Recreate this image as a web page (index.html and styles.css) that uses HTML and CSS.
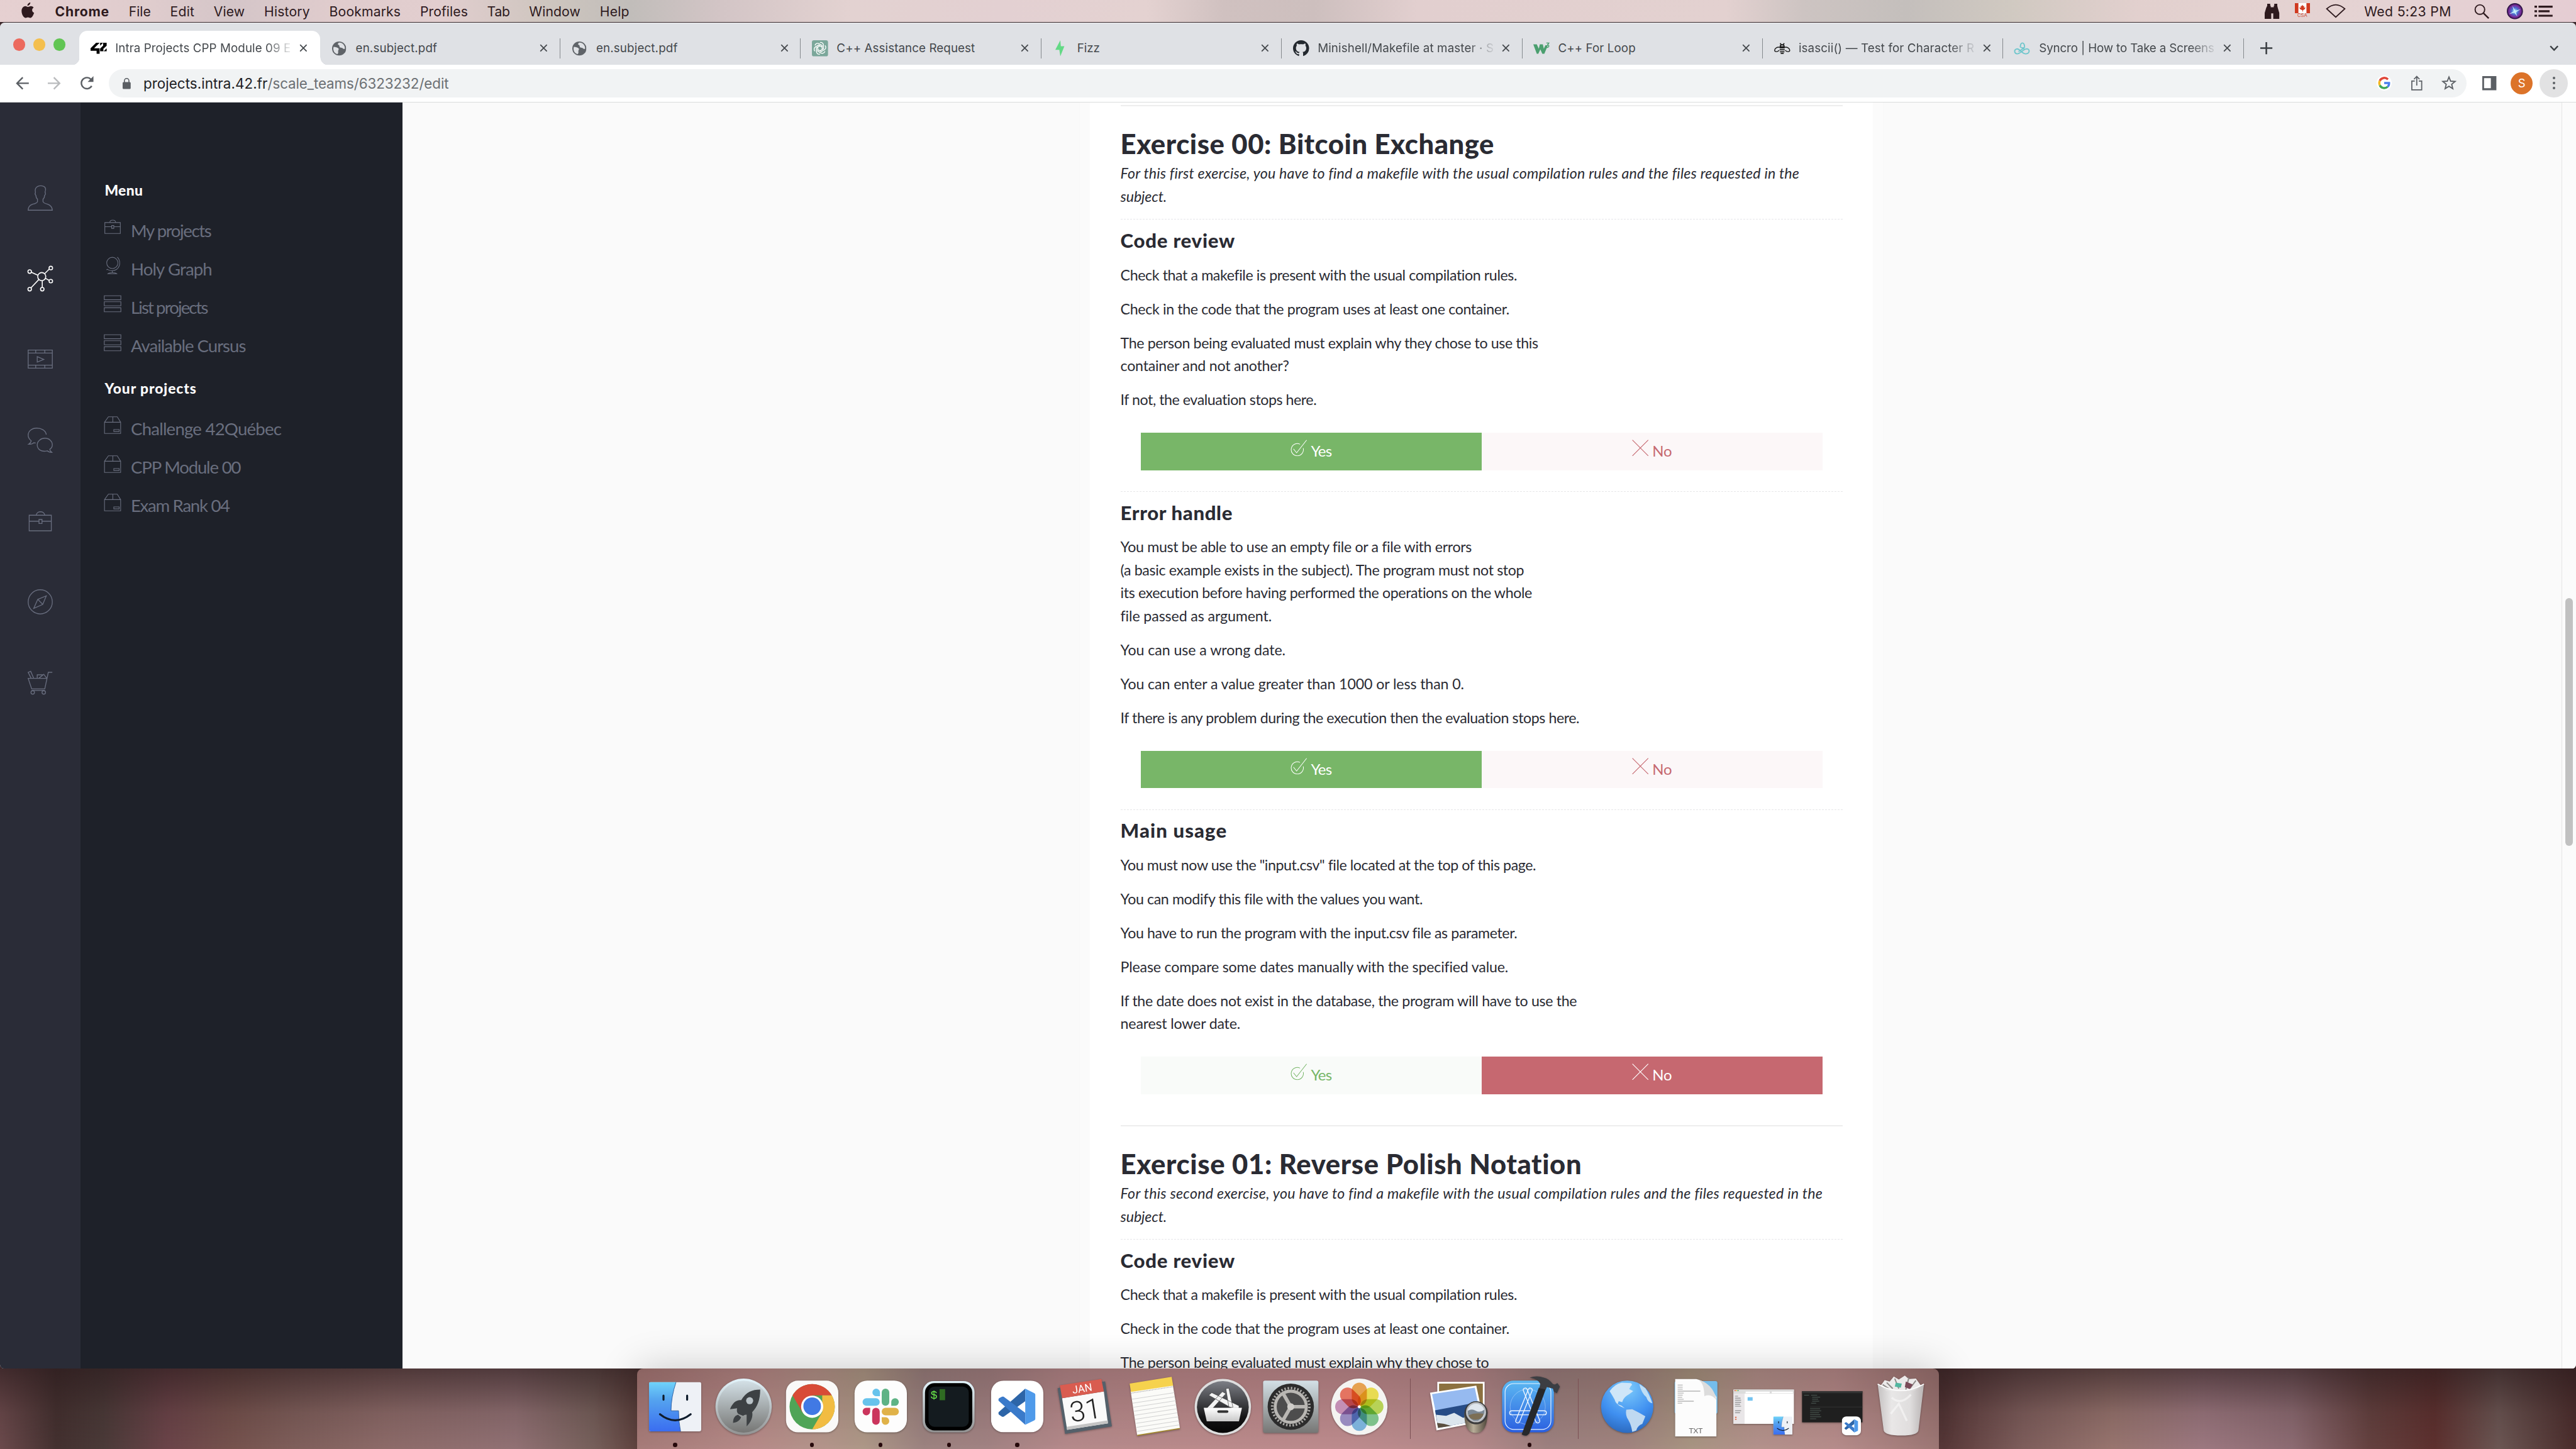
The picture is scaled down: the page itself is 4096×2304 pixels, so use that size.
FILE: index.html
```html
<!DOCTYPE html>
<html lang="en">
<head>
<meta charset="utf-8">
<title>Intra Projects CPP Module 09</title>
<link rel="stylesheet" href="styles.css">
</head>
<body>
<svg class="defs" aria-hidden="true">
  <defs>
    <linearGradient id="gFinder" x1="0" y1="0" x2="0" y2="1"><stop offset="0" stop-color="#6fd3fa"/><stop offset=".35" stop-color="#55a4ef"/><stop offset="1" stop-color="#3a6df0"/></linearGradient>
    <linearGradient id="gSilver" x1="0" y1="0" x2="0" y2="1"><stop offset="0" stop-color="#d3e0e6"/><stop offset="1" stop-color="#767674"/></linearGradient>
    <linearGradient id="gRim" x1="0" y1="0" x2="0" y2="1"><stop offset="0" stop-color="#e3f4fb"/><stop offset="1" stop-color="#929292"/></linearGradient>
    <linearGradient id="gDark" x1="0" y1="0" x2="0" y2="1"><stop offset="0" stop-color="#7d7f86"/><stop offset=".7" stop-color="#151516"/><stop offset="1" stop-color="#050505"/></linearGradient>
    <linearGradient id="gWhite" x1="0" y1="0" x2="0" y2="1"><stop offset="0" stop-color="#fff"/><stop offset="1" stop-color="#c9c9c9"/></linearGradient>
    <linearGradient id="gXcode" x1="0" y1="0" x2="0" y2="1"><stop offset="0" stop-color="#5cb9f2"/><stop offset="1" stop-color="#2b5fe0"/></linearGradient>
    <radialGradient id="gGlobe" cx=".5" cy=".15" r=".9"><stop offset="0" stop-color="#7ccbfb"/><stop offset=".6" stop-color="#3f8ff0"/><stop offset="1" stop-color="#2a65b8"/></radialGradient>
    <radialGradient id="gSiri"><stop offset="0" stop-color="#bff"/><stop offset=".4" stop-color="#4a6fd0"/><stop offset=".75" stop-color="#7a2a9a"/><stop offset="1" stop-color="#140a2c"/></radialGradient>
    <linearGradient id="gTrash" x1="0" y1="0" x2="1" y2="0"><stop offset="0" stop-color="#c9c6c6"/><stop offset=".3" stop-color="#efefef"/><stop offset=".7" stop-color="#e6e5e5"/><stop offset="1" stop-color="#bdb9b9"/></linearGradient>
    <linearGradient id="gBarrel" x1="0" y1="0" x2="1" y2="0"><stop offset="0" stop-color="#5f5648"/><stop offset=".4" stop-color="#b8ad98"/><stop offset="1" stop-color="#4d4539"/></linearGradient>

    <symbol id="close" viewBox="0 0 16 16"><path d="M1.5 1.5l13 13M14.500 1.500l-13 13" stroke="#45494d" stroke-width="2.300" fill="none"/></symbol>
    <symbol id="globe-tab" viewBox="0 0 28 28"><circle cx="14" cy="14" r="14" fill="#5f6368"/><path d="M3 10.500c4 0 8 1 10 3.500 1 2-1 3-1 5 0 2 1 3-1 6C6 24 2.500 20 2.500 14zM13 2.500c-2 2-2 3.500 0 4.500 2.500 1 1 3 2.500 4.500 2 1.500 5 .5 6.500 2.500 1 1.500 2.500 1 3.500 0C26 8 20 1 13 2.500z" fill="#dfe1e5"/></symbol>
    <symbol id="briefcase" viewBox="0 0 50 50"><path d="M3 14h44v31H3zM3 26h20M27.500 26H47M22.500 22.500h6v8h-6zM17 14c1-9 16-9 17 0" fill="none" stroke="currentColor"/></symbol>
    <symbol id="list" viewBox="0 0 35 34"><path d="M1 1h33v8H1zM1 13h33v8H1zM1 25h33v8H1z" fill="none" stroke="currentColor"/></symbol>
    <symbol id="box" viewBox="0 0 35 36"><path d="M1 12h33v23H1zM1 12l8-11h18l7 11M18 1v11M20 27h11v4H20z" fill="none" stroke="currentColor"/></symbol>
    <symbol id="yes" viewBox="0 0 34 34"><path d="M19.500 9.500A12.500 12.500 0 1 0 26 17.500M6 19l6.500 8L33 1" fill="none" stroke="currentColor" stroke-width="1.300"/></symbol>
    <symbol id="no" viewBox="0 0 33 33"><path d="M.8.8l31.500 31.500M32.300.8L.8 32.300" fill="none" stroke="currentColor" stroke-width="1.400"/></symbol>
    <symbol id="finder" viewBox="0 0 104 98"><rect width="104" height="98" rx="4" fill="#eef1f6"/><path d="M4 0h50Q44 30 44 57h15q0 22 4 41H4q-4 0-4-4V4q0-4 4-4z" fill="url(#gFinder)"/><path d="M54 0Q44 30 44 57h15q0 22 4 41" fill="none" stroke="#1c4f94" stroke-width="1"/><path d="M29 27v8M76 27v8M22 64q30 24 61 0" fill="none" stroke="#0f1c2c" stroke-width="4" stroke-linecap="round"/></symbol>
    <symbol id="vscode" viewBox="0 0 104 103"><rect width="104" height="103" rx="25" fill="#fff"/><path d="M68 16L15 63q-1 3 1 5l6 4h3L68 41z" fill="#2d65a8"/><path d="M15 40q-1-3 1-5l6-3h3l43 32v24z" fill="#3a7aca"/><path d="M68 16l18 9q2 1 2 3v48q0 2-2 3l-18 9z" fill="#4f9aea"/></symbol>
  </defs>
</svg>

<header class="menubar">
  <svg class="apple" viewBox="0 0 26 32"><path d="M18 0c0 3-2.500 6.500-6 6.500C11.500 3.500 15 0 18 0zM13 9c2 0 3.500-1.700 6-1.700 2.200 0 4.300 1 5.700 3-4.500 2.700-3.800 9 1 10.700C24.500 25 21.500 31.500 18 31.500c-2 0-3-1.200-5-1.200s-3 1.200-5 1.200C4 31.500 0 24 0 17.500 0 11 4 7.300 8 7.300c2 0 3.500 1.700 5 1.700z" fill="#2e1a1e"/></svg>
  <nav class="menus">
    <b class="m-app" data-w="108">Chrome</b><span data-w="44">File</span><span data-w="48">Edit</span><span data-w="62">View</span><span data-w="91">History</span><span data-w="142">Bookmarks</span><span data-w="95">Profiles</span><span data-w="45">Tab</span><span data-w="102">Window</span><span data-w="59">Help</span>
  </nav>
  <div class="status">
    <svg class="s-bino" viewBox="0 0 30 30"><path d="M5 0h6v4h1v3h6V4h1V0h6v4l1 4 3 10v12H17V19h-4v11H0V18L3 8l2-4z" fill="#2e1a1e"/></svg>
    <span class="flag">
      <svg viewBox="0 0 30 20"><path fill="#fff" d="M0 0h30v20H0z"/><path fill="#d03a20" d="M0 0h7v20H0zM23 0h7v20h-7zM15 3l1.500 3 2-.7-.5 4 3-1.300-1 3.500-4 3v2.500h-1V14.500l-5-3-1-3.500 3 1.300-.5-4 2 .7z"/></svg>
      <i>CSA</i>
    </span>
    <svg class="s-wifi" viewBox="0 0 40 28"><path d="M2 10Q20-6 38 10L20 26.500z" fill="none" stroke="#2e1a1e" stroke-width="2.200"/></svg>
    <span class="clock" data-w="173">Wed 5:23 PM</span>
    <svg class="s-mag" viewBox="0 0 30 30"><circle cx="11.500" cy="11.500" r="9.500" fill="none" stroke="#2e1a1e" stroke-width="2.400"/><path d="M18.500 18.500L29 29" stroke="#2e1a1e" stroke-width="3"/></svg>
    <svg class="s-siri" viewBox="0 0 32 32"><circle cx="16" cy="16" r="16" fill="url(#gSiri)"/><path d="M4 22l10-6L11 5l6 10 11-3-10 6 3 9-6-8z" fill="#cff4fa" opacity=".85"/></svg>
    <svg class="s-list" viewBox="0 0 36 22"><path d="M0 2h5M8 2h28M0 11h5M8 11h22M0 20h5M8 20h28" stroke="#2e1a1e" stroke-width="4"/></svg>
  </div>
</header>

<main class="window">
  <div class="tabstrip">
    <div class="lights"><i class="red"></i><i class="amber"></i><i class="green"></i></div>
    <div class="tab active"><svg class="fav" viewBox="0 0 32 32"><path d="M11 5h7L7 16h11v11h-6v-6H0v-5zM19 5h6l-6 6zM25 5h7v6l-6.500 6v5H19v-5.500l6-6zM32 16v6h-6z" fill="#000"/></svg><span class="tt fade" data-w="349">Intra Projects CPP Module 09 E</span><svg class="x"><use href="#close"/></svg></div>
    <div class="tab nosep"><svg class="fav sm"><use href="#globe-tab"/></svg><span class="tt" data-w="162">en.subject.pdf</span><svg class="x"><use href="#close"/></svg></div>
    <div class="tab"><svg class="fav sm"><use href="#globe-tab"/></svg><span class="tt" data-w="162">en.subject.pdf</span><svg class="x"><use href="#close"/></svg></div>
    <div class="tab"><svg class="fav" viewBox="0 0 32 32"><rect width="32" height="32" rx="4" fill="#7ba79a"/><g fill="none" stroke="#fff" stroke-width="1.700"><path id="k" d="M16 4.500c4-1 7 2 7 5.500v7l-7 4"/><use href="#k" transform="rotate(60 16 16)"/><use href="#k" transform="rotate(120 16 16)"/><use href="#k" transform="rotate(180 16 16)"/><use href="#k" transform="rotate(240 16 16)"/><use href="#k" transform="rotate(300 16 16)"/></g></svg><span class="tt" data-w="275">C++ Assistance Request</span><svg class="x"><use href="#close"/></svg></div>
    <div class="tab"><svg class="fav" viewBox="0 0 32 32"><path d="M15 0L5 19h8l0 0 2 13 8-20h-7z" fill="#63d985"/></svg><span class="tt" data-w="45">Fizz</span><svg class="x"><use href="#close"/></svg></div>
    <div class="tab"><svg class="fav" viewBox="0 0 16 16"><path fill="#24292f" d="M8 0C3.580 0 0 3.580 0 8c0 3.540 2.290 6.530 5.470 7.590.4.070.55-.17.55-.38 0-.19-.01-.82-.01-1.490-2.010.37-2.530-.49-2.690-.94-.09-.23-.48-.94-.82-1.130-.28-.15-.68-.52-.01-.53.63-.01 1.080.58 1.230.82.72 1.210 1.870.87 2.330.66.070-.52.28-.87.51-1.070-1.780-.2-3.640-.89-3.640-3.950 0-.87.31-1.590.82-2.150-.08-.2-.36-1.020.08-2.120 0 0 .67-.21 2.200.82.64-.18 1.320-.27 2-.27s1.360.09 2 .27c1.530-1.040 2.200-.82 2.200-.82.44 1.100.16 1.920.08 2.120.51.56.82 1.270.82 2.150 0 3.070-1.870 3.750-3.650 3.950.29.25.54.73.54 1.480 0 1.070-.01 1.930-.01 2.200 0 .21.15.46.55.38A8.010 8.010 0 0 0 16 8c0-4.420-3.580-8-8-8z"/></svg><span class="tt fade" data-w="350">Minishell/Makefile at master · S</span><svg class="x"><use href="#close"/></svg></div>
    <div class="tab"><svg class="fav" viewBox="0 0 32 32"><path d="M0 8h7l4 9 2-9h6l2 9 3-7h5l-7 17h-4l-4-9-4 9H7z" fill="#4b9f6f"/><path d="M26 5.500h5l-2.500 3.500q3.500 1 2 4-2 2.500-5 .5" fill="none" stroke="#4b9f6f" stroke-width="1.800"/></svg><span class="tt" data-w="154">C++ For Loop</span><svg class="x"><use href="#close"/></svg></div>
    <div class="tab"><svg class="fav" viewBox="0 0 32 32"><path d="M12 6l2 3h4l2-3M16 9c-3 0-4 2-4 4h8c0-2-1-4-4-4zM11 15h10M11 19h10M11.500 23h9M13 26h6" stroke="#1d1d1d" stroke-width="2.200" fill="none"/><path d="M11 14c-5-1-10 2-10 6 0 3 5 4 9 0M21 14c5-1 10 2 10 6 0 3-5 4-9 0" fill="none" stroke="#1d1d1d" stroke-width="1.800"/></svg><span class="tt fade" data-w="349">isascii() — Test for Character R</span><svg class="x"><use href="#close"/></svg></div>
    <div class="tab"><svg class="fav" viewBox="0 0 32 32"><g fill="none" stroke="#6fc6cc" stroke-width="2.300"><path d="M12 13C11 3 21 3 20 13M11 12c2 4 8 4 10 1M3 18c6-5 12 10 20 9 8-1 8-9 2-10-8 0-12 10-20 10-5-1-6-7-2-9M8 22c3 1 6-6 12-6"/></g></svg><span class="tt fade" data-w="348">Syncro | How to Take a Screens</span><svg class="x"><use href="#close"/></svg></div>
    <div class="newtab"><svg viewBox="0 0 24 24"><path d="M12 0v24M0 12h24" stroke="#3b3f43" stroke-width="3.200"/></svg></div>
    <svg class="chev" viewBox="0 0 18 12"><path d="M1.500 1.500L9 9.500l7.500-8" fill="none" stroke="#3b3f43" stroke-width="3"/></svg>
  </div>

  <div class="toolbar">
    <svg class="nav-i" viewBox="0 0 26 26"><path d="M26 13H2.500M14 1.500L2.500 13 14 24.500" fill="none" stroke="#5b5f64" stroke-width="3"/></svg>
    <svg class="nav-i" viewBox="0 0 26 26"><path d="M0 13h23.500M12 1.500L23.500 13 12 24.500" fill="none" stroke="#b9bbbd" stroke-width="3"/></svg>
    <svg class="nav-i reload" viewBox="0 0 28 28"><path d="M23.500 19.500A11 11 0 1 1 22 6.500" fill="none" stroke="#5b5f64" stroke-width="3"/><path d="M27 0v11.500H15.500z" fill="#5b5f64"/></svg>
    <div class="omnibox">
      <svg class="lock" viewBox="0 0 16 22"><path d="M3.500 9V5.500a4.500 4.500 0 0 1 9 0V9" fill="none" stroke="#5b5f64" stroke-width="2"/><rect y="8" width="16" height="14" rx="2" fill="#5b5f64"/></svg>
      <span class="url"><span data-w="246">projects.intra.42.fr</span><span class="path" data-w="360">/scale_teams/6323232/edit</span></span>
      <svg class="g" viewBox="0 0 30 30"><circle cx="15" cy="15" r="15" fill="#fff"/><g fill="none" stroke-width="4.300"><path d="M22.500 7.800A10 10 0 0 0 6.300 10.500" stroke="#e0483a"/><path d="M6.300 10.500a10 10 0 0 0 0 9" stroke="#f3b822"/><path d="M6.300 19.500a10 10 0 0 0 15.500 3" stroke="#3fa757"/><path d="M21.800 22.500A9.500 9.500 0 0 0 24.700 15H15" stroke="#4a80ee"/></g></svg>
      <svg class="share" viewBox="0 0 22 30"><path d="M7 11H1.200v17.500h19.600V11H15M11 20V2M5.500 7.500L11 2l5.500 5.500" fill="none" stroke="#5b5f64" stroke-width="2.200"/></svg>
      <svg class="star" viewBox="0 0 30 30"><path d="M15 3l3.300 8.300 9 .6-6.900 5.700 2.200 8.700L15 21.500l-7.600 4.800 2.200-8.700L2.700 11.900l9-.6z" fill="none" stroke="#5b5f64" stroke-width="2.300"/></svg>
    </div>
    <svg class="side" viewBox="0 0 28 28"><path d="M0 0h28v28H0zM3.500 4v20H17V4z" fill="#5b5f64" fill-rule="evenodd"/></svg>
    <span class="avatar">S</span>
    <span class="more"><i></i><i></i><i></i></span>
  </div>

  <div class="page">
    <aside class="rail">
      <svg viewBox="0 0 50 50"><path d="M1 49q0-9 9-12 9-2 9.500-5V27q-3-2-3-7-3-3-1-6-2-9 4-12 6-3 13 0 5 3 2 11 2 4-1 7 0 5-3 7v5q1 3 9 5 9 3 9.500 12z" fill="none" stroke="currentColor"/></svg>
      <svg class="on" viewBox="0 0 50 50"><g fill="none" stroke="currentColor"><circle cx="28" cy="21" r="8"/><circle cx="4" cy="11" r="3.500"/><circle cx="46" cy="4" r="3.500"/><circle cx="46" cy="30" r="3.500"/><circle cx="29" cy="46" r="3.500"/><circle cx="4" cy="46" r="3.500"/><path d="M7.500 12.500L20 18M34 15l9-9M35.500 24.500l7 4M29 29v13.500M6.500 43.500L22 27"/></g></svg>
      <svg viewBox="0 0 50 50"><path d="M1 7h48v36H1zM1 13h48M1 37h48M16 7v6M34 7v6M16 37v6M34 37v6M19 20v11l13-5.500z" fill="none" stroke="currentColor"/></svg>
      <svg viewBox="0 0 50 50"><path d="M37 14C36 5 27 1 18 1 8 1 1 7 1 15c0 5 2 8 6 11 0 3-2 5-5 7 5 0 8-1 10-3l4 .5M34 21c9 0 15 6 15 13 0 4-2 7-5 9 0 3 2 4 4 6-4 0-7-1-9-3-12 3-20-3-20-12 0-7 7-13 15-13z" fill="none" stroke="currentColor"/></svg>
      <svg><use href="#briefcase"/></svg>
      <svg viewBox="0 0 50 50"><circle cx="25" cy="25" r="24" fill="none" stroke="currentColor"/><path d="M37 13l-7 17-18 8 8-18zM20 20l10 10" fill="none" stroke="currentColor"/></svg>
      <svg viewBox="0 0 50 50"><path d="M49 5h-8L34 38H8L1 17h38M7 17L1 5l5-2 6 14M19 17v-7h12M22 17l10-8 6 8" fill="none" stroke="currentColor"/><circle cx="10" cy="45" r="3.500" fill="none" stroke="currentColor"/><circle cx="32" cy="45" r="3.500" fill="none" stroke="currentColor"/><path d="M8 41h26" stroke="currentColor"/></svg>
    </aside>
    <nav class="submenu">
      <h2 data-w="76">Menu</h2>
      <ul>
        <li><svg class="bc"><use href="#briefcase"/></svg><span data-w="159">My projects</span></li>
        <li><svg viewBox="0 0 35 36"><g fill="none" stroke="currentColor"><circle cx="17" cy="13" r="11.500"/><path d="M27 1l2 2c6 9 4 25-13 26-4 0-7-1-9-3l-2 1M17 29v4M8 35c3-3 15-3 18 0z"/></g></svg><span data-w="161">Holy Graph</span></li>
        <li><svg><use href="#list"/></svg><span data-w="152">List projects</span></li>
        <li><svg><use href="#list"/></svg><span data-w="228">Available Cursus</span></li>
      </ul>
      <h2 data-w="183">Your projects</h2>
      <ul>
        <li><svg><use href="#box"/></svg><span data-w="299">Challenge 42Québec</span></li>
        <li><svg><use href="#box"/></svg><span data-w="218">CPP Module 00</span></li>
        <li><svg><use href="#box"/></svg><span data-w="196">Exam Rank 04</span></li>
      </ul>
    </nav>

    <div class="content">
      <div class="card">
        <section class="exercise">
          <h1><span data-w="743">Exercise 00: Bitcoin Exchange</span></h1>
          <p class="lead"><span data-w="1347">For this first exercise, you have to find a makefile with the usual compilation rules and the files requested in the</span><span data-w="92">subject.</span></p>
          <div class="question">
            <h3><span data-w="228">Code review</span></h3>
            <p><span data-w="788">Check that a makefile is present with the usual compilation rules.</span></p>
            <p><span data-w="773">Check in the code that the program uses at least one container.</span></p>
            <p><span data-w="830">The person being evaluated must explain why they chose to use this</span><span data-w="335">container and not another?</span></p>
            <p><span data-w="390">If not, the evaluation stops here.</span></p>
            <div class="answers"><div class="yes picked"><svg><use href="#yes"/></svg><span data-w="41">Yes</span></div><div class="no"><svg><use href="#no"/></svg><span data-w="39">No</span></div></div>
          </div>
          <div class="question">
            <h3><span data-w="223">Error handle</span></h3>
            <p><span data-w="697">You must be able to use an empty file or a file with errors</span><span data-w="802">(a basic example exists in the subject). The program must not stop</span><span data-w="819">its execution before having performed the operations on the whole</span><span data-w="300">file passed as argument.</span></p>
            <p><span data-w="328">You can use a wrong date.</span></p>
            <p><span data-w="683">You can enter a value greater than 1000 or less than 0.</span></p>
            <p><span data-w="913">If there is any problem during the execution then the evaluation stops here.</span></p>
            <div class="answers"><div class="yes picked"><svg><use href="#yes"/></svg><span data-w="41">Yes</span></div><div class="no"><svg><use href="#no"/></svg><span data-w="39">No</span></div></div>
          </div>
          <div class="question last">
            <h3><span data-w="212">Main usage</span></h3>
            <p><span data-w="825">You must now use the "input.csv" file located at the top of this page.</span></p>
            <p><span data-w="600">You can modify this file with the values you want.</span></p>
            <p><span data-w="788">You have to run the program with the input.csv file as parameter.</span></p>
            <p><span data-w="770">Please compare some dates manually with the specified value.</span></p>
            <p><span data-w="907">If the date does not exist in the database, the program will have to use the</span><span data-w="238">nearest lower date.</span></p>
            <div class="answers"><div class="yes"><svg><use href="#yes"/></svg><span data-w="41">Yes</span></div><div class="no picked"><svg><use href="#no"/></svg><span data-w="39">No</span></div></div>
          </div>
        </section>
        <section class="exercise">
          <h1><span data-w="918">Exercise 01: Reverse Polish Notation</span></h1>
          <p class="lead"><span data-w="1394">For this second exercise, you have to find a makefile with the usual compilation rules and the files requested in the</span><span data-w="92">subject.</span></p>
          <div class="question">
            <h3><span data-w="228">Code review</span></h3>
            <p><span data-w="788">Check that a makefile is present with the usual compilation rules.</span></p>
            <p><span data-w="773">Check in the code that the program uses at least one container.</span></p>
            <p><span data-w="732">The person being evaluated must explain why they chose to</span></p>
          </div>
        </section>
      </div>
    </div>
    <div class="scrollbar"><i></i></div>
  </div>
</main>

<footer class="desk">
  <div class="dock">
    <div class="cell run"><svg viewBox="0 0 136 160"><use href="#finder" x="16" y="27" width="104" height="98"/></svg></div>
    <div class="cell"><svg viewBox="0 0 136 160"><circle cx="68" cy="76" r="56" fill="url(#gRim)"/><circle cx="68" cy="76" r="51.500" fill="url(#gSilver)"/><path d="M101 42c-16 0-28 5-38 21-9-1-17 5-22 18l14-2c-1 6 0 10 4 12l8 3c3-2 4-2 7-2l0 23c9-8 13-20 11-28 10-10 16-24 16-45z" fill="#3d4144"/><circle cx="80" cy="64" r="7" fill="#b9c2c7"/><path d="M57 92c-7 2-10 8-10 16 8-1 13-4 16-11z" fill="#3d4144"/></svg></div>
    <div class="cell run"><svg viewBox="0 0 136 160"><rect x="16" y="24" width="104" height="103" rx="24" fill="#faf9f8"/><circle cx="68" cy="76" r="45" fill="#4fa457"/><path d="M29 53.500A45 45 0 0 1 107 53.500H68L48.500 87z" fill="#d84b37"/><path d="M107 53.500A45 45 0 0 1 68 121l20-34L88 53.500z" fill="#f2bc42"/><circle cx="68" cy="76" r="22" fill="#fff"/><circle cx="68" cy="75" r="17.500" fill="#4179e4"/></svg></div>
    <div class="cell run"><svg viewBox="0 0 136 160"><rect x="16" y="24" width="104" height="103" rx="25" fill="#fdfdfd"/><path d="M66.500 55H58a7.500 7.500 0 1 1 8.500-8z" fill="#67c3ec"/><rect x="32" y="59" width="34" height="15" rx="7.500" fill="#67c3ec"/><rect x="70" y="40" width="15" height="34" rx="7.500" fill="#5eb385"/><path d="M89 74v-8a7.500 7.500 0 1 1 8 8z" fill="#5eb385"/><path d="M47 78v8a7.500 7.500 0 1 1-8-8z" fill="#cb355d"/><rect x="51" y="78" width="15" height="34" rx="7.500" fill="#cb355d"/><rect x="70" y="78" width="34" height="15" rx="7.500" fill="#e0b248"/><path d="M70 97h8a7.500 7.500 0 1 1-8 8z" fill="#e0b248"/></svg></div>
    <div class="cell run"><svg viewBox="0 0 136 160"><rect x="16.500" y="25" width="103" height="102" rx="22" fill="url(#gRim)"/><rect x="21" y="29" width="94" height="94" rx="19" fill="#000"/><rect x="28" y="36" width="80" height="80" rx="12" fill="#141b1f"/><text x="32" y="60" font-family="Liberation Mono, monospace" font-size="23" fill="#6be84b">$</text><rect x="50" y="41" width="11" height="22" fill="#2f6b22"/></svg></div>
    <div class="cell run"><svg viewBox="0 0 136 160"><use href="#vscode" x="16" y="24" width="104" height="103"/></svg></div>
    <div class="cell"><svg viewBox="0 0 136 160"><path d="M12 39l94.500-13.500L120 115l-93 15z" fill="#54606a"/><path d="M21 59l83-13.500L112 109l-81 13z" fill="#fafafa"/><path d="M16.500 33.500L99 21l5 24.500L21 59z" fill="#d95c50"/><path d="M30 116l82-13v6l-81 13z" fill="#c4c4c4"/><g font-family="Roboto, sans-serif" text-anchor="middle"><text transform="translate(62 47) rotate(-9)" font-size="21" fill="#fff">JAN</text><text transform="translate(70 102) rotate(-9)" font-size="56" font-weight="300" fill="#222">31</text></g></svg></div>
    <div class="cell"><svg viewBox="0 0 136 160"><path d="M21 45l84-12 14 86-85 14z" fill="#fbfbf8"/><path d="M19 30l83.500-13.300 3 17.300-84 12.700z" fill="#f6d24d"/><path d="M22 49l84-13" stroke="#9b9b9b" stroke-width="1.500" stroke-dasharray="1.500 1.500"/><path d="M24 61l84-13M25 69l84-13M27 77l84-13M28 85l84-13M29 93l84-13M30 101l84-13M32 109l84-13M33 117l84-13M34 125l84-13" stroke="#cfcfcf" stroke-width="1.200"/><path d="M34 133l85-14" stroke="#a58a2e" stroke-width="2"/></svg></div>
    <div class="cell"><svg viewBox="0 0 136 160"><circle cx="68" cy="76.500" r="56" fill="#dedede"/><circle cx="68" cy="76.500" r="51.500" fill="url(#gDark)"/><path d="M40 53l6-5 54 26v5H86zM36 79L67 46l7 4-26 29zM74 40l6-1 8 38h-8z" fill="#f3f3f3" stroke="#333" stroke-width=".8"/><path d="M30 78h76l-6 27H36z" fill="url(#gWhite)"/><rect x="57" y="83" width="22" height="5" rx="2.500" fill="#333"/></svg></div>
    <div class="cell"><svg viewBox="0 0 136 160"><rect x="13" y="24" width="110" height="104" rx="4" fill="url(#gSilver)"/><circle cx="68" cy="76" r="46" fill="#2c2c2c"/><circle cx="68" cy="76" r="37" fill="none" stroke="#aaa9a6" stroke-width="5" stroke-dasharray="3 3.450"/><circle cx="68" cy="76" r="31" fill="#4d4d4d" stroke="#b9b7b3" stroke-width="6"/><path d="M68 76h31M68 76L52.500 49M68 76l-15.500 27" stroke="#b9b7b3" stroke-width="7"/><circle cx="68" cy="76" r="7" fill="#cfcdc9"/></svg></div>
    <div class="cell"><svg viewBox="0 0 136 160"><circle cx="68" cy="76" r="56" fill="#f4f4f2"/><g class="petals"><rect x="53" y="28" width="30" height="46" rx="15" fill="#f0a042"/><rect x="53" y="28" width="30" height="46" rx="15" fill="#f2e244" transform="rotate(45 68 76)"/><rect x="53" y="28" width="30" height="46" rx="15" fill="#b9d84a" transform="rotate(90 68 76)"/><rect x="53" y="28" width="30" height="46" rx="15" fill="#76c487" transform="rotate(135 68 76)"/><rect x="53" y="28" width="30" height="46" rx="15" fill="#74b2e2" transform="rotate(180 68 76)"/><rect x="53" y="28" width="30" height="46" rx="15" fill="#9585c4" transform="rotate(225 68 76)"/><rect x="53" y="28" width="30" height="46" rx="15" fill="#c88ab8" transform="rotate(270 68 76)"/><rect x="53" y="28" width="30" height="46" rx="15" fill="#ee6a55" transform="rotate(315 68 76)"/></g><circle cx="68" cy="76" r="3" fill="#fff"/></svg></div>
    <div class="sep first"></div>
    <div class="cell"><svg viewBox="0 0 136 160"><rect x="20.500" y="26.500" width="94" height="64" fill="#fff"/><rect x="24" y="30" width="87" height="58" fill="#8c7140"/><path d="M6 48l92-14 15 71-94 18z" fill="#fff"/><path d="M10 51l85-13 7 34-85 13z" fill="#96baf0"/><path d="M16 83l86-16 7 35-87 16z" fill="#274c86"/><path d="M18 92l20 2 16-6 18 10 32-13 5 17-87 16z" fill="#dce6ee"/><path d="M22 118l-2-10 14 2 14 4z" fill="#5b5040"/><path d="M74 88q0 40 23 40t23-40z" fill="url(#gBarrel)"/><circle cx="97.500" cy="88" r="23" fill="#3b3b3b"/><circle cx="97.500" cy="87" r="20" fill="#b9bcc0"/><circle cx="97.500" cy="87" r="17" fill="#dfe6ee"/><path d="M81 84q8-5 16 0t17-2v6q-5 16-17 16T81 90z" fill="#7c8894"/><path d="M82 93q14-6 31-3a17 17 0 0 1-31 3z" fill="#7c6f56"/></svg></div>
    <div class="cell run"><svg viewBox="0 0 136 160"><rect x="13" y="24" width="103" height="103" rx="23" fill="url(#gXcode)"/><g fill="none" stroke="#e8f3ff"><rect x="19" y="30" width="91" height="91" rx="17" stroke-width="1.500"/><circle cx="64" cy="76" r="35" stroke-width=".8" opacity=".6"/><g stroke-width="1.800"><rect x="28" y="84" width="73" height="8" rx="4"/><rect x="60" y="38" width="8" height="74" rx="4" transform="rotate(22 64 55)"/><rect x="60" y="38" width="8" height="74" rx="4" transform="rotate(-22 64 55)"/></g></g><path d="M86 38l14 3-33 88q-6 8-15 2z" fill="#26282b"/><path d="M68 18q14-5 28 0 10 2 18 13l4 1 5-3 5 7-6 13-6-3-2-6-12-3-2 5-13-3 2-8q-3-10-21-13z" fill="#3c3e43"/></svg></div>
    <div class="sep second"></div>
    <div class="cell"><svg viewBox="0 0 136 160"><circle cx="68" cy="76" r="52" fill="url(#gGlobe)"/><path d="M33 45q10-14 24-17l18 1q5 3 0 6l-3 6 8 4-8 6q-9 5-12 11l-2 5-7-2-2 6 8 3 6 5-9-4q-9-5-11-13l-5-9z" fill="#cfe6f8"/><path d="M66 82l12-1 14 7 12 7-6 15q-10 4-12 13l-8 3q-2-14-8-24-6-8-4-20z" fill="#bfd9f1"/><path d="M92 31l12 8q8 12 14 30-9-1-12-12-10-8-14-26z" fill="#bfdef5"/></svg></div>
    <div class="cell"><svg viewBox="0 0 136 160"><rect x="26" y="25" width="85" height="65" rx="4" fill="#74bdec"/><path d="M31 21h38q22 4 40 36v78H27V21z" fill="#fcfcfc"/><path d="M69 21q16 4 16 34 14-6 24 8-6-34-40-42z" fill="#dcdcdc"/><path d="M32 33h10M32 37h10M32 41h10M32 45h45M32 49h12M32 53h10M32 57h9M32 61h12M32 65h32M32 69h9" stroke="#b5b5b5" stroke-width="1.600"/><text x="68" y="128.500" text-anchor="middle" font-family="Lato, sans-serif" font-size="15" fill="#6b6b6b">TXT</text></svg></div>
    <div class="cell"><svg viewBox="0 0 136 160"><rect x="8" y="42" width="120" height="68" fill="#fff"/><path d="M8 42h120v8H8z" fill="#dcdcdc"/><path d="M8 50h22v60H8z" fill="#e9e6e8"/><path d="M11 55h6M11 59h11M11 63h12M11 67h12M11 71h10M11 75h12M11 84h12M11 88h10" stroke="#8c8c8c" stroke-width="1.500"/><path d="M10 44h2" stroke="#e0483a" stroke-width="2"/><path d="M13 44h2" stroke="#f3b822" stroke-width="2"/><path d="M16 44h2" stroke="#3fa757" stroke-width="2"/><path d="M32 47.500h48M84 47.500h42" stroke="#fff" stroke-width="3"/><path d="M11 97h3M11 101h3" stroke="#e0603a" stroke-width="2"/><rect x="36" y="57" width="10" height="7" fill="#74c3f0"/><use href="#finder" x="87" y="95" width="38" height="37"/></svg></div>
    <div class="cell"><svg viewBox="0 0 136 160"><rect x="8" y="45" width="120" height="62" fill="#1f1f1f"/><path d="M8 45h120v4H8z" fill="#333"/><path d="M12 53h10M26 53h12M28 57h16M28 61h12M28 65h14M26 69h10M24 80h20M24 84h22M24 88h18M24 92h20M24 96h22M24 100h12" stroke="#53605a" stroke-width="1.200"/><path d="M24 76.500h104" stroke="#3a3a3a"/><use href="#vscode" x="87" y="95" width="38" height="38"/></svg></div>
    <div class="cell"><svg viewBox="0 0 136 160"><path d="M28 34l8-11 10 3 8-10 10 6 12-8 8 7 14-1 10 14-12 10H38z" fill="#eceaea"/><path d="M40 28l12 12M56 20l8 20M84 18l-6 24M98 24l-12 16M32 32l12 8" stroke="#8f8a88" stroke-width="2.500"/><path d="M58 28l12 2-2 8-12-2z" fill="#53b6a0"/><path d="M78 26l14 6-6 9-10-4z" fill="#7a4a58"/><path d="M22 31q46 26 92 0l-11 92q-2 10-34 10t-35-10z" fill="url(#gTrash)" opacity=".95"/><path d="M22 31q46 26 92 0" fill="none" stroke="#fff" stroke-width="2"/><path d="M50 58q18 16 38-6M48 90l16-20 16 34" fill="none" stroke="#fafafa" stroke-width="4" opacity=".6"/></svg></div>
  </div>
</footer>
<script src="fit.js"></script>
</body>
</html>
```

FILE: fit.js
```js
// Tracks each label so that it fills its measured width (data-w, in tenths of a rem).
const rem = parseFloat(getComputedStyle(document.documentElement).fontSize);
for (const el of document.querySelectorAll('[data-w]')) {
  const range = document.createRange();
  range.selectNodeContents(el);
  const natural = range.getBoundingClientRect().width;
  const target = Number(el.dataset.w) * rem / 10;
  const count = [...el.textContent].length;
  el.style.letterSpacing = ((target - natural) / count).toFixed(3) + 'px';
}
```

FILE: styles.css
```css
/* 1rem = 5 points of the desktop; every length is in rem. */
html { font-size: 8px; }
* { box-sizing: border-box; }
body {
  margin: 0;
  width: 100vw;
  height: 100vh;
  overflow: hidden;
  display: flex;
  flex-direction: column;
  font-family: Inter, "Liberation Sans", sans-serif;
  background: #3a2427;
}
svg { display: block; flex: none; overflow: visible; }
.defs { width: 0; height: 0; position: absolute; }
h1, h2, h3, p, ul { margin: 0; padding: 0; list-style: none; }

/* menu bar */
.menubar {
  flex: none;
  height: 4.4rem;
  display: flex;
  align-items: center;
  padding: 0 4.6rem 0 4.2rem;
  color: #2e1a1e;
  font-size: 2.65rem;
  background: linear-gradient(90deg, #e6d0d1 0, #dfcccd 6%, #d4c5c8 9%, #e0cccd 13%, #e2cecf 17%, #cdc5be 21.500%, #c1bdba 24.500%, #d3c5c6 28%, #e3d2d1 33%, #e3d0d2 39%, #e4d2d1 44.500%, #d0c1c0 47.500%, #cdbfbe 51%, #e2cfcf 55%, #e3d1d0 67%, #cdc4c2 70%, #c4bfbc 74%, #d0c9c1 78%, #e2d0ce 83%, #e5d3d3 92%, #e5cdd3 100%);
}
.apple { width: 2.6rem; height: 3.1rem; margin-top: -.4rem; }
.menus { display: flex; gap: 3.840rem; margin-left: 4.15rem; white-space: nowrap; }
.m-app { font-weight: 700; }
.status { margin-left: auto; display: flex; align-items: center; white-space: nowrap; }
.s-bino { width: 3rem; height: 3rem; }
.flag { width: 3rem; margin-left: 3rem; display: flex; flex-direction: column; align-items: center; }
.flag svg { width: 3rem; height: 2rem; }
.flag i { font: 400 .95rem/1.1rem Inter, sans-serif; color: #c9452f; }
.s-wifi { width: 4rem; height: 2.8rem; margin-left: 3.2rem; }
.clock { margin-left: 3.6rem; }
.s-mag { width: 3rem; height: 3rem; margin-left: 4.6rem; }
.s-siri { width: 3.2rem; height: 3.2rem; margin-left: 3.4rem; }
.s-list { width: 3.6rem; height: 2.2rem; margin-left: 2.4rem; }

/* browser window */
.window {
  flex: none;
  height: 267.6rem;
  display: flex;
  flex-direction: column;
  border-top: .2rem solid #35262a;
  overflow: hidden;
  border-radius: 0 0 .8rem .8rem;
}
.tabstrip {
  flex: none;
  height: 8.4rem;
  display: flex;
  align-items: flex-end;
  background: #dfe1e5;
  border-top: .2rem solid #eef0f2;
  border-radius: .9rem .9rem 0 0;
}
.lights { width: 15.8rem; height: 8.2rem; display: flex; align-items: center; gap: 1.6rem; padding: .1rem 0 0 2.6rem; }
.lights i { width: 2.4rem; height: 2.4rem; border-radius: 50%; }
.red { background: #ec6a5e; }
.amber { background: #f4bf4e; }
.green { background: #61c554; }
.tab {
  width: 47.8rem;
  height: 6.800rem;
  display: flex;
  align-items: center;
  padding: .15rem 2.4rem 0 2.2rem;
  border-right: .2rem solid transparent;
  background: linear-gradient(#85898d, #85898d) 100% 1.5rem / .15rem 4rem no-repeat;
  background-origin: border-box;
  font-size: 2.35rem;
  color: #45494d;
  white-space: nowrap;
}
.tab.active { background: #fff; border-radius: 1.6rem 1.6rem 0 0; position: relative; color: #45494d; }
.tab.active::before, .tab.active::after {
  content: "";
  position: absolute;
  bottom: 0;
  width: 1.6rem;
  height: 1.6rem;
  background: radial-gradient(circle at 0 0, transparent 1.550rem, #fff 1.6rem);
  left: -1.6rem;
}
.tab.active::after { left: auto; right: -1.8rem; background: radial-gradient(circle at 100% 0, transparent 1.550rem, #fff 1.6rem); }
.fav { width: 3.2rem; height: 3.2rem; }
.fav.sm { width: 2.8rem; height: 2.8rem; margin: 0 .2rem; }
.tt { margin-left: 1.7rem; flex: 1; overflow: hidden; line-height: 3.2rem; }
.fade { -webkit-mask-image: linear-gradient(90deg, #000 83%, transparent 99%); mask-image: linear-gradient(90deg, #000 83%, transparent 99%); }
.x { width: 1.6rem; height: 1.6rem; margin-left: .6rem; }
.newtab { padding: 0 0 2.2rem 3.3rem; }
.newtab svg { width: 2.4rem; height: 2.4rem; }
.chev { width: 1.8rem; height: 1.2rem; margin: 0 3.5rem 2.7rem auto; }

.toolbar {
  flex: none;
  height: 7.4rem;
  display: flex;
  align-items: center;
  padding: 0 1.6rem 0 3.1rem;
  background: #fff;
  border-bottom: .2rem solid #dadcdc;
}
.nav-i { width: 2.6rem; height: 2.6rem; margin-right: 3.8rem; }
.nav-i.reload { width: 2.8rem; height: 2.8rem; margin-right: 2.9rem; }
.omnibox { flex: 1; height: 5.6rem; border-radius: 2.8rem; background: #f1f3f4; display: flex; align-items: center; padding: 0 2rem 0 2.8rem; }
.lock { width: 1.6rem; height: 2.2rem; margin-right: 2.5rem; }
.url { font-size: 2.8rem; color: #202124; white-space: nowrap; flex: 1; }
.path { color: #6b6f73; }
.g { width: 3rem; height: 3rem; }
.share { width: 2.2rem; height: 3rem; margin-left: 3.9rem; }
.star { width: 3rem; height: 3rem; margin-left: 3.8rem; }
.side { width: 2.8rem; height: 2.8rem; margin-left: 3.1rem; }
.avatar { width: 4.4rem; height: 4.4rem; margin-left: 2.8rem; border-radius: 50%; background: #dc7329; color: #fff; font-size: 2.3rem; display: flex; align-items: center; justify-content: center; }
.more { width: 5.6rem; height: 5.6rem; margin-left: 1.4rem; border-radius: 50%; background: #e2e2e3; display: flex; flex-direction: column; align-items: center; justify-content: center; gap: .5rem; }
.more i { width: .5rem; height: .5rem; border-radius: 50%; background: #5b5f64; }

/* intra page */
.page { flex: 1; min-height: 0; display: flex; background: #fafafa; font-family: Lato, "Liberation Sans", sans-serif; }
.rail { width: 16rem; background: #2a2c37; color: #686d7e; display: flex; flex-direction: column; align-items: center; padding-top: 16.5rem; gap: 11.050rem; stroke-width: 1.7; }
.rail svg { width: 5rem; height: 5rem; }
.rail .on { color: #fff; stroke-width: 2; }
.submenu { width: 64rem; background: #1e2129; padding: 15.8rem 0 0 4.6rem; white-space: nowrap; }
.submenu h2 { color: #fff; font-size: 2.85rem; font-weight: 900; line-height: 3.4rem; width: max-content; margin-left: .2rem; }
.submenu ul { margin: 4.05rem 0 1.4rem; }
.submenu li { display: flex; align-items: flex-start; height: 7.65rem; color: #696e7e; font-size: 3.450rem; line-height: 4.6rem; }
.submenu li svg { width: 3.5rem; height: 3.5rem; margin: -.2rem 1.9rem 0 0; stroke-width: 1.4; }
.submenu li .bc { stroke-width: 2; margin-top: -.3rem; }

.content { flex: 1; display: flex; justify-content: flex-start; padding-left: 134.6rem; overflow: hidden; }
.card { width: 159.7rem; border: solid #fbfbfb; border-width: 0 2rem; background: #fff; padding: .6rem 6rem 0 6.1rem; color: #2a2b33; box-shadow: 0 0 0 .1rem #f8f8f8; height: 300rem; }
.exercise { border-top: .3rem solid #ededee; padding-top: 4.350rem; }
.card span { display: block; width: max-content; white-space: nowrap; }
.card h1 { font-size: 5.45rem; font-weight: 900; line-height: 6rem; margin-bottom: .65rem; }
.card p { font-size: 2.9rem; line-height: 4.57rem; margin-bottom: 2.18rem; }
.card .lead { font-style: italic; margin-bottom: 2.25rem; }
.question { border-top: .2rem dashed #e6e6e9; padding: 1.95rem 0 4.17rem; }
.question.last { padding-bottom: 6.2rem; }
.question h3 { font-size: 3.9rem; font-weight: 900; line-height: 4.4rem; margin-bottom: 2.28rem; }
.answers { display: flex; margin: 4.3rem 4.1rem 0 4rem; height: 7.45rem; font-size: 3rem; }
.answers div { flex: 1; display: flex; justify-content: center; gap: .75rem; line-height: 7.3rem; padding-bottom: .2rem; }
.answers svg { width: 3.3rem; height: 3.3rem; margin-top: 1.4rem; }
.yes { background: #f9fbf9; color: #77b668; }
.no { background: #fcf7f8; color: #c66870; }
.yes.picked { background: #78b668; color: #fff; }
.no.picked { background: #c66870; color: #fff; }

.scrollbar { width: 2.9rem; border-left: .15rem solid #e6e6e6; background: #fbfbfb; padding: 98.6rem 0 0 .6rem; }
.scrollbar i { display: block; width: 1.6rem; height: 49.2rem; border-radius: .8rem; background: #c1c1c1; }

/* desktop strip and dock */
.desk {
  flex: 1;
  display: flex;
  padding-left: 126.6rem;
  background:
    linear-gradient(180deg, rgba(40, 24, 26, .62) 0, rgba(40, 24, 26, .15) 55%, rgba(40, 24, 26, 0) 100%),
    linear-gradient(90deg, #6b4a4c 0, #43302f 2.200%, #4a3a38 4%, #6b4449 6.500%, #75524d 9%, #7f5f5b 11.500%, #8d6b69 15%, #917174 20%, #76605b 23%, #5c3b37 25.500%, #6b4c4a 29%, #5a3a3a 75.500%, #7d5d5b 78.500%, #98756f 82%, #9c7880 85.500%, #8c6b72 89%, #64413f 92%, #5d302e 94.500%, #6b5653 97%, #4a2c2b 100%);
}
.dock {
  position: relative;
  width: 258.8rem;
  height: 16rem;
  padding: 0 .8rem;
  display: flex;
  border-radius: 1.2rem 1.2rem 0 0;
  box-shadow: 0 0 8rem rgba(0, 0, 0, .2);
  background:
    linear-gradient(180deg, rgba(60, 40, 40, .16) 0, rgba(255, 220, 215, .12) 100%),
    linear-gradient(90deg, #9a6e6c 0, #ab7f7d 9%, #a98a80 14%, #a28e7c 17.500%, #8e7674 22%, #957677 27%, #aa7e80 33%, #b17f81 45%, #b38083 55%, #aa7e80 64%, #8f7473 70%, #937772 76%, #9c8a76 81%, #a88781 86%, #ab8180 92%, #8f6967 100%);
}
.cell { width: 13.6rem; height: 16rem; position: relative; flex: none; }
.cell svg { width: 13.6rem; height: 16rem; filter: drop-shadow(0 .2rem .2rem rgba(0, 0, 0, .35)); }
.run::after { content: ""; position: absolute; left: 6.4rem; top: 14.8rem; width: .8rem; height: .8rem; border-radius: 50%; background: #26090b; }
.petals rect { mix-blend-mode: multiply; opacity: .9; }
.sep { flex: none; width: 6.600rem; margin: 2rem 0; background: linear-gradient(#7b5054, #7b5054) 3.3rem 0 / .15rem 100% no-repeat; }
.sep.second { width: 5.8rem; background-position: 2.8rem 0; }
```
